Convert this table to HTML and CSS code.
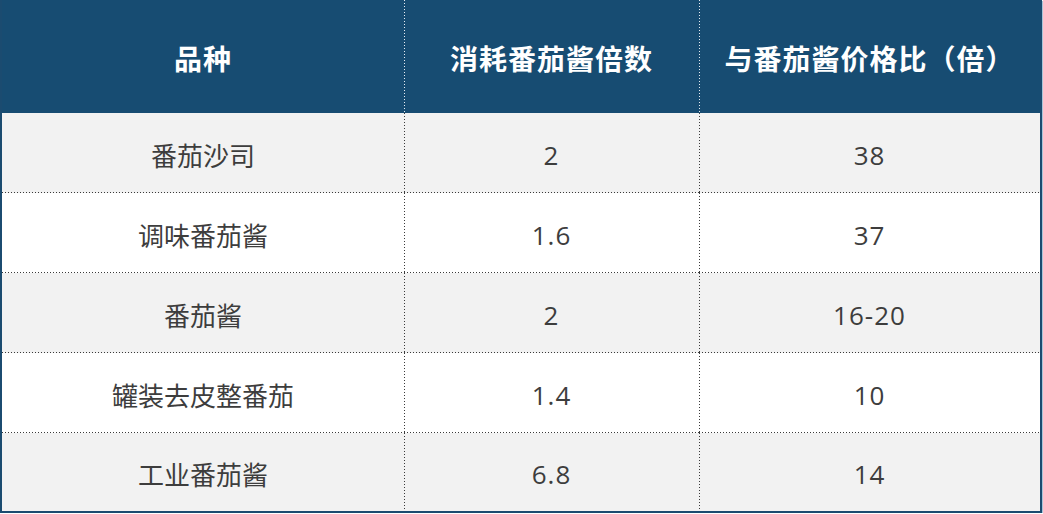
FILE: index.html
```html
<!DOCTYPE html>
<html lang="zh-CN">
<head>
<meta charset="utf-8">
<title>番茄制品</title>
<link rel="stylesheet" href="styles.css">
</head>
<body>
<div class="table">
  <div class="cell head">品种</div>
  <div class="cell head mid">消耗番茄酱倍数</div>
  <div class="cell head mid">与番茄酱价格比（倍）</div>

  <div class="cell odd">番茄沙司</div>
  <div class="cell odd mid num">2</div>
  <div class="cell odd mid num">38</div>

  <div class="cell">调味番茄酱</div>
  <div class="cell mid num">1.6</div>
  <div class="cell mid num">37</div>

  <div class="cell odd">番茄酱</div>
  <div class="cell odd mid num">2</div>
  <div class="cell odd mid num">16-20</div>

  <div class="cell">罐装去皮整番茄</div>
  <div class="cell mid num">1.4</div>
  <div class="cell mid num">10</div>

  <div class="cell odd last">工业番茄酱</div>
  <div class="cell odd mid num last">6.8</div>
  <div class="cell odd mid num last">14</div>
</div>
</body>
</html>
```

FILE: styles.css
```css
html, body {
  margin: 0;
  padding: 0;
  background: #ffffff;
}

.table {
  box-sizing: border-box;
  width: 1042px;
  display: grid;
  grid-template-columns: 402px 295px 1fr;
  grid-template-rows: 113px repeat(4, 80px) 78px;
  border: 2px solid #1b4b70;
  border-top: 0;
  box-shadow: 1px 1px 0 #a9c4d9;
  font-family: "Open Sans", "Noto Sans CJK SC", sans-serif;
}

.cell {
  box-sizing: border-box;
  display: flex;
  align-items: center;
  justify-content: center;
  padding-top: 4px;
  font-size: 26px;
  color: #3d3d3d;
  background-color: #ffffff;
  background-image: repeating-linear-gradient(to right, #3a3a3a 0 1px, transparent 1px 3px);
  background-size: 100% 1px;
  background-position: left bottom;
  background-repeat: no-repeat;
}

.cell.num {
  letter-spacing: 1px;
}

.cell.mid {
  background-image:
    repeating-linear-gradient(to right, #3a3a3a 0 1px, transparent 1px 3px),
    repeating-linear-gradient(to bottom, #3a3a3a 0 1px, transparent 1px 3px);
  background-size: 100% 1px, 1px 100%;
  background-position: left bottom, left top;
  background-repeat: no-repeat, no-repeat;
}

.cell.odd {
  background-color: #f2f2f2;
}

.cell.last {
  background-image: none;
}

.cell.mid.last {
  background-image: repeating-linear-gradient(to bottom, #3a3a3a 0 1px, transparent 1px 3px);
  background-size: 1px 100%;
  background-position: left top;
}

.cell.head {
  background-color: #174c72;
  background-image: none;
  color: #ffffff;
  font-weight: 700;
  font-size: 28px;
  letter-spacing: 1px;
  padding-top: 3px;
  font-family: "Noto Sans CJK SC", sans-serif;
}

.cell.head.mid {
  background-image: repeating-linear-gradient(to bottom, #e8eef4 0 1px, transparent 1px 3px);
  background-size: 1px 100%;
  background-position: left top;
  background-repeat: no-repeat;
}
```
